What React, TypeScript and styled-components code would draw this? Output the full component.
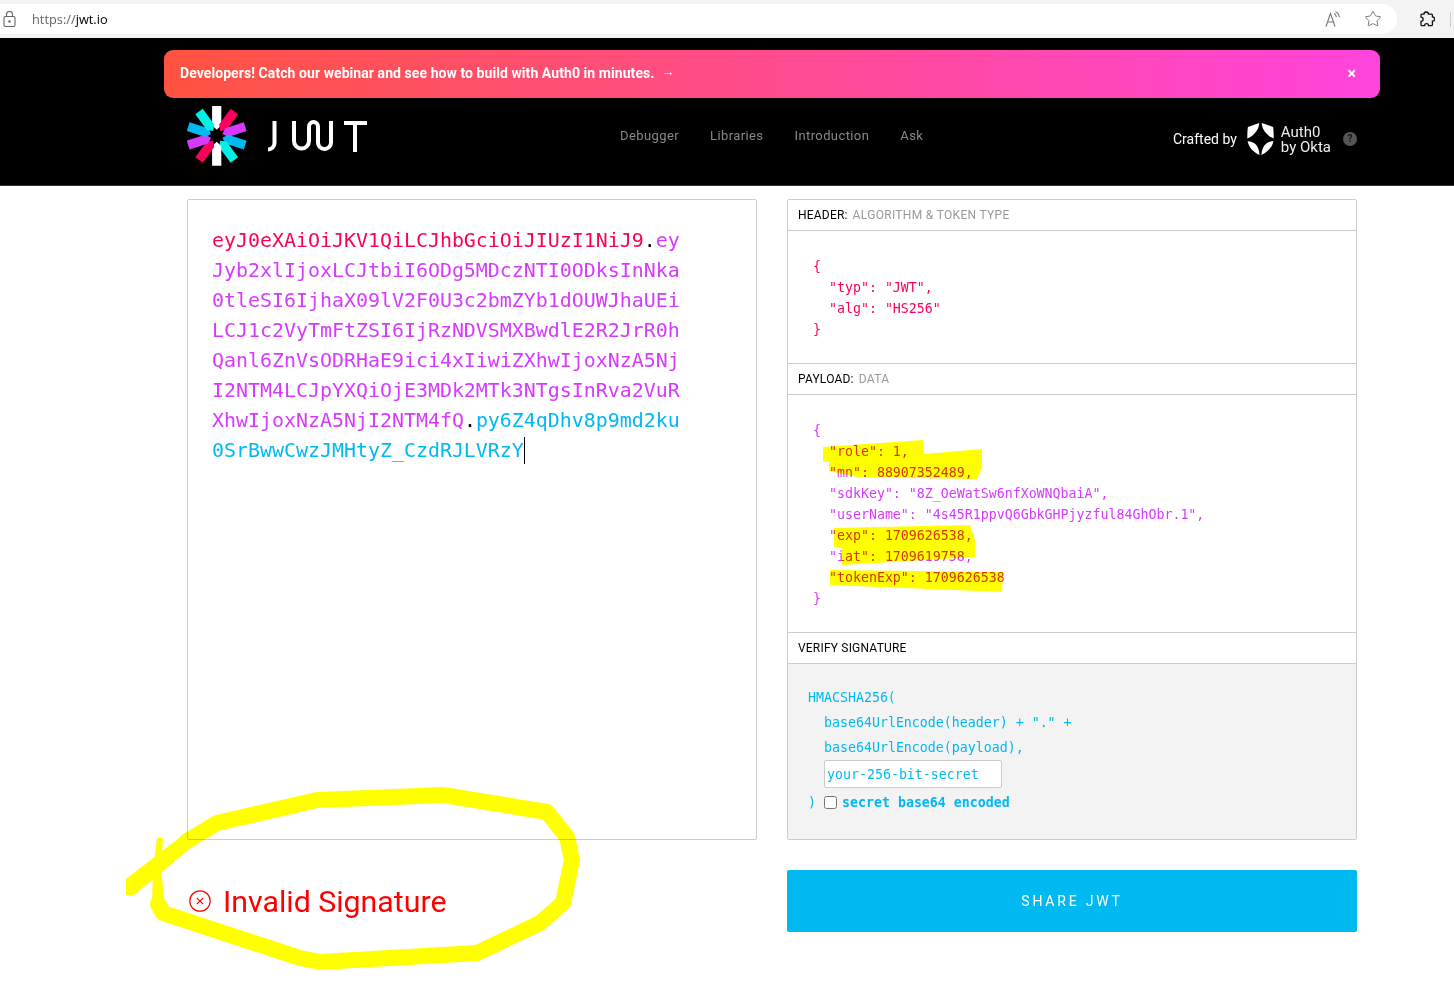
import React from "react";
import styled, { createGlobalStyle } from "styled-components";
import { Star } from "lucide-react";

const Global = createGlobalStyle`
  html, body { margin: 0; padding: 0; background: #fff; overflow: hidden; }
  * { box-sizing: border-box; }
`;

const MONO = `"DejaVu Sans Mono", "Liberation Mono", monospace`;
const SANS = `Roboto, "Liberation Sans", sans-serif`;
const RED = "#fb015b";
const PURPLE = "#d63aff";
const BLUE = "#00b9f1";

const Screen = styled.div`
  position: relative;
  width: 1454px;
  height: 997px;
  overflow: hidden;
  font-family: ${SANS};
`;

const BrowserBar = styled.div`
  height: 38px;
  background: #f3f3f3;
  padding: 4px 0;
  display: flex;
  align-items: stretch;
`;
const AddressPill = styled.div`
  width: 1397px;
  background: #fff;
  border-radius: 0 15px 15px 0;
  display: flex;
  align-items: center;
  padding: 0 15px 0 3px;
`;
const Url = styled.div`
  margin-left: 16px;
  font: 12.8px "Open Sans", sans-serif;
  color: #666;
  span { color: #000; }
`;
const BarActions = styled.div`
  margin-left: auto;
  display: flex;
  align-items: center;
  gap: 23px;
  color: #777;
`;
const ToolArea = styled.div`
  flex: 1;
  display: flex;
  align-items: center;
  padding-left: 22px;
`;
const BarDivider = styled.div`
  width: 1px;
  height: 15px;
  background: #ccc;
  margin-left: 15px;
`;

const Header = styled.header`
  height: 148px;
  background: #000;
  border-bottom: 1px solid #333;
  padding: 12px 0 0 164px;
`;
const Banner = styled.div`
  width: 1216px;
  height: 48px;
  border-radius: 9px;
  background: linear-gradient(90deg, #ff5340 0%, #ff44dd 100%);
  color: #fff;
  display: flex;
  align-items: center;
  padding: 0 24px 2px 16px;
  font: 700 14px ${SANS};
  letter-spacing: 0.07px;
`;
const Arrow = styled.span`
  margin: 0 0 4px 7px;
  font-size: 13px;
`;
const Close = styled.span`
  margin-left: auto;
  font-size: 16px;
  font-weight: 700;
`;
const Brand = styled.div`
  width: 1216px;
  height: 60px;
  margin-top: 8px;
  padding: 0 23px;
  display: flex;
  align-items: center;
`;
const Nav = styled.nav`
  display: flex;
  gap: 31px;
  margin-left: 251px;
  margin-top: -1px;
`;
const NavLink = styled.a`
  font: 400 13px ${SANS};
  letter-spacing: 0.4px;
  color: #888;
`;
const Crafted = styled.div`
  margin-left: auto;
  margin-top: 6px;
  display: flex;
  align-items: center;
  color: #fff;
  font: 400 14px ${SANS};
`;
const AuthName = styled.div`
  margin-left: 7px;
  padding-top: 2px;
  font-size: 15px;
  line-height: 15px;
  color: #eee;
`;
const Help = styled.div`
  width: 14px;
  height: 14px;
  border-radius: 50%;
  background: #555;
  color: #111;
  margin-left: 12px;
  font: 700 10px/14px ${SANS};
  text-align: center;
`;

const Main = styled.main`
  width: 1170px;
  margin: 13px 0 0 187px;
`;
const Columns = styled.div`
  display: grid;
  grid-template-columns: 570px 570px;
  gap: 30px;
`;
const Panel = styled.section`
  height: 641px;
  border: 1px solid #ccc;
  border-radius: 2px;
  background: #fff;
  display: flex;
  flex-direction: column;
  overflow: hidden;
`;
const Token = styled.div`
  width: 472px;
  margin: 26px 0 0 24px;
  font: 400 19.93px/30px ${MONO};
  word-break: break-all;
`;
const Part = styled.span<{ $c: string }>`
  color: ${(p) => p.$c};
`;
const Dot = styled.span`
  color: #000;
`;
const Caret = styled.span`
  display: inline-block;
  width: 1px;
  height: 27px;
  background: #000;
  vertical-align: -7px;
`;
const Section = styled.div<{ $h?: number; $first?: boolean }>`
  border-top: ${(p) => (p.$first ? "none" : "1px solid #ccc")};
  display: flex;
  flex-direction: column;
  flex: ${(p) => (p.$h ? `0 0 ${p.$h}px` : "1")};
`;
const Title = styled.div`
  height: 31px;
  border-bottom: 1px solid #ccc;
  padding: 0 10px;
  display: flex;
  align-items: center;
  gap: 5px;
  font: 400 12px ${SANS};
  letter-spacing: 0.2px;
  color: #000;
  flex: none;
`;
const Sub = styled.span`
  color: #999;
  letter-spacing: 0.32px;
`;
const Json = styled.pre<{ $c: string }>`
  margin: 0;
  padding: 25px 0 0 25px;
  font: 400 13.28px/21px ${MONO};
  color: ${(p) => p.$c};
`;
const VerifyBody = styled.div`
  flex: 1;
  background: #f3f3f3;
  padding: 21px 0 0 20px;
  font: 400 13.28px/25px ${MONO};
  color: ${BLUE};
`;
const Indent = styled.div`
  padding-left: 16px;
`;
const SecretInput = styled.input`
  display: block;
  width: 178px;
  height: 28px;
  margin: 0 0 0 16px;
  padding: 0 2px;
  background: #fff;
  border: 1px solid #ccc;
  border-radius: 2px;
  font: 400 13.28px ${MONO};
  color: ${BLUE};
  outline: none;
`;
const CheckRow = styled.div`
  display: flex;
  align-items: center;
  height: 28px;
`;
const Check = styled.input`
  width: 13px;
  height: 13px;
  margin: 0 5px 0 8px;
`;
const Bold = styled.b`
  font-weight: 700;
`;

const Bottom = styled.div`
  display: grid;
  grid-template-columns: 570px 570px;
  gap: 30px;
  margin-top: 30px;
`;
const Status = styled.div`
  height: 62px;
  display: flex;
  align-items: center;
  padding-left: 2px;
  gap: 12px;
  color: #f00;
  font: 400 30.3px ${SANS};
`;
const Share = styled.button`
  height: 62px;
  border: none;
  background: ${BLUE};
  color: #fff;
  font: 400 14px ${SANS};
  letter-spacing: 2.8px;
  border-radius: 2px;
`;
const Ink = styled.svg`
  position: absolute;
  inset: 0;
  pointer-events: none;
  mix-blend-mode: multiply;
`;

const petals = [
  ["#fff", 0], [RED, 36], [PURPLE, 72], [BLUE, 108], ["#00f2e6", 144],
  ["#fff", 180], [RED, 216], [PURPLE, 252], [BLUE, 288], ["#00f2e6", 324],
] as const;

const Logo = () => (
  <svg width="182" height="60" viewBox="187 106 182 60" style={{ flex: "none" }}>
    <g transform="translate(216.7 135.8)">
      {petals.map(([c, a]) => (
        <polygon key={a} points="-4.6,-30 4.6,-30 4.6,-10.5 0,-6 -4.6,-10.5" fill={c} transform={`rotate(${a})`} />
      ))}
    </g>
    <g fill="none" stroke="#fff" strokeWidth="4">
      <path d="M274.5 121V143a6.5 6.5 0 0 1-6.5 6.5" />
      <path d="M294 121V141a7.5 7.5 0 0 0 15 0V126.5a4.5 4.5 0 0 1 9 0V142.5a6.5 6.5 0 0 0 13 0V121" />
      <path d="M344 123H367M355 123V152" />
    </g>
  </svg>
);

const Shield = () => (
  <svg width="27" height="32" viewBox="0 0 80 97" fill="#fff" style={{ flex: "none", marginLeft: 10 }}>
    <path d="M2 12L36 0C36 18 22 38 0 47C0 35 0 22 2 12Z" />
    <path d="M44 0L78 12C80 22 80 35 80 47C58 38 44 18 44 0Z" />
    <path d="M1 55C22 55 36 70 37 97C16 87 4 72 1 55Z" />
    <path d="M79 55C58 55 44 70 43 97C64 87 76 72 79 55Z" />
  </svg>
);

const Lock = () => (
  <svg width="13" height="16" viewBox="0 0 13 16" fill="none" stroke="#666" strokeWidth="1.1">
    <rect x="1" y="5.5" width="11" height="10" rx="1.5" />
    <path d="M3.5 5.5V3.5a3 3 0 0 1 6 0v2" />
    <circle cx="6.5" cy="10.5" r="0.7" fill="#666" />
  </svg>
);

const ReadAloud = () => (
  <svg width="16" height="16" viewBox="0 0 16 16" fill="none" stroke="#777" strokeWidth="1.1">
    <path d="M1 15.5L5.5 2.5l4.5 13M2.4 11h6.2" />
    <path d="M9 2.5c1.4.7 2.2 2 2.4 3.6M10.5.7c2.2 1 3.6 3 3.9 5.6" />
  </svg>
);

const Extensions = () => (
  <svg width="16" height="16" viewBox="0 0 16 16" fill="none" stroke="#111" strokeWidth="1.3">
    <path d="M5 3.2a2.2 2.2 0 0 1 4.4 0H12.5a.9.9 0 0 1 .9.9V5.8a2.2 2.2 0 0 1 0 4.4V13.7a1 1 0 0 1-1 1H9.6a2 2 0 0 0-4 0H3a1 1 0 0 1-1-1V10.4a2.1 2.1 0 0 0 0-4.2V4.2a1 1 0 0 1 1-1Z" />
  </svg>
);

const InvalidIcon = () => (
  <svg width="22" height="22" viewBox="0 0 22 22" fill="none" stroke="#f00" strokeWidth="1.2">
    <circle cx="11" cy="11" r="10.2" />
    <path d="M7.8 7.8l6.4 6.4M14.2 7.8l-6.4 6.4" />
  </svg>
);

export default function App() {
  return (
    <Screen>
      <Global />
      <BrowserBar>
        <AddressPill>
          <Lock />
          <Url>https://<span>jwt.io</span></Url>
          <BarActions>
            <ReadAloud />
            <Star size={18} strokeWidth={1.3} />
          </BarActions>
        </AddressPill>
        <ToolArea>
          <Extensions />
          <BarDivider />
        </ToolArea>
      </BrowserBar>
      <Header>
        <Banner>
          Developers! Catch our webinar and see how to build with Auth0 in minutes.
          <Arrow>→</Arrow>
          <Close>×</Close>
        </Banner>
        <Brand>
          <Logo />
          <Nav>
            <NavLink>Debugger</NavLink>
            <NavLink>Libraries</NavLink>
            <NavLink>Introduction</NavLink>
            <NavLink>Ask</NavLink>
          </Nav>
          <Crafted>
            Crafted by
            <Shield />
            <AuthName>Auth0<br />by Okta</AuthName>
            <Help>?</Help>
          </Crafted>
        </Brand>
      </Header>
      <Main>
        <Columns>
          <Panel>
            <Token>
              <Part $c={RED}>eyJ0eXAiOiJKV1QiLCJhbGciOiJIUzI1NiJ9</Part>
              <Dot>.</Dot>
              <Part $c={PURPLE}>eyJyb2xlIjoxLCJtbiI6ODg5MDczNTI0ODksInNka0tleSI6IjhaX09lV2F0U3c2bmZYb1dOUWJhaUEiLCJ1c2VyTmFtZSI6IjRzNDVSMXBwdlE2R2JrR0hQanl6ZnVsODRHaE9ici4xIiwiZXhwIjoxNzA5NjI2NTM4LCJpYXQiOjE3MDk2MTk3NTgsInRva2VuRXhwIjoxNzA5NjI2NTM4fQ</Part>
              <Dot>.</Dot>
              <Part $c={BLUE}>py6Z4qDhv8p9md2ku0SrBwwCwzJMHtyZ_CzdRJLVRzY</Part>
              <Caret />
            </Token>
          </Panel>
          <Panel>
            <Section $h={163} $first>
              <Title>HEADER: <Sub>ALGORITHM &amp; TOKEN TYPE</Sub></Title>
              <Json $c={RED}>{`{
  "typ": "JWT",
  "alg": "HS256"
}`}</Json>
            </Section>
            <Section $h={269}>
              <Title>PAYLOAD: <Sub>DATA</Sub></Title>
              <Json $c={PURPLE}>{`{
  "role": 1,
  "mn": 88907352489,
  "sdkKey": "8Z_OeWatSw6nfXoWNQbaiA",
  "userName": "4s45R1ppvQ6GbkGHPjyzful84GhObr.1",
  "exp": 1709626538,
  "iat": 1709619758,
  "tokenExp": 1709626538
}`}</Json>
            </Section>
            <Section>
              <Title>VERIFY SIGNATURE</Title>
              <VerifyBody>
                <div>HMACSHA256(</div>
                <Indent>base64UrlEncode(header) + "." +</Indent>
                <Indent>base64UrlEncode(payload),</Indent>
                <SecretInput readOnly value="your-256-bit-secret" />
                <CheckRow>
                  )<Check type="checkbox" readOnly />
                  <Bold>secret base64 encoded</Bold>
                </CheckRow>
              </VerifyBody>
            </Section>
          </Panel>
        </Columns>
        <Bottom>
          <Status>
            <InvalidIcon />
            Invalid Signature
          </Status>
          <Share>SHARE JWT</Share>
        </Bottom>
      </Main>
      <Ink width="1454" height="997" viewBox="0 0 1454 997">
        <g fill="#ffff00">
          <polygon points="823,447 923,440 924,454 982,449 982,468 977,479 858,477 829,471 829,462 823,462" />
          <polygon points="834,528 970,525 975,540 975,557 842,565 842,548 834,547" />
          <polygon points="830,570 1003,572 1002,592 830,585" />
          <polygon points="126,879 183,835 192,847 134,895 126,895" />
          <polygon points="157,838 163,838 161,870 165,905 152,903 153,870" />
        </g>
        <path
          d="M187 841L217 823L317 800L443 795L547 812L567 837L572 860L563 903L540 923L477 953L320 962L300 958L163 913L158 904"
          fill="none"
          stroke="#ffff00"
          strokeWidth="16"
          strokeLinejoin="round"
          strokeLinecap="round"
        />
      </Ink>
    </Screen>
  );
}
